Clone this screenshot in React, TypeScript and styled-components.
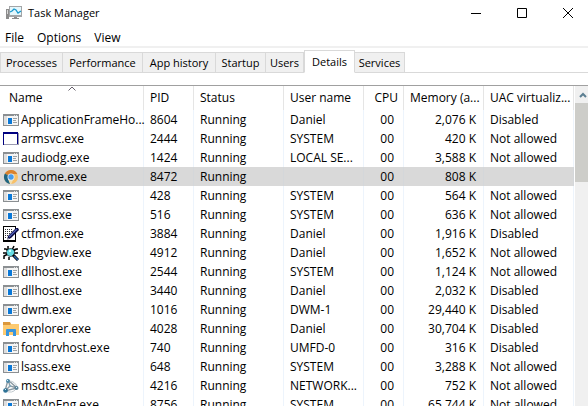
import React from "react";
import styled, { createGlobalStyle } from "styled-components";

const GlobalStyle = createGlobalStyle`
  * { box-sizing: border-box; }
  html, body { margin: 0; height: 100%; overflow: hidden; background: #fff; }
  body, button { font-family: "Open Sans", "Noto Sans", sans-serif; font-size: 12px; color: #000; }
  svg { display: block; flex: none; }
`;

const Window = styled.main`
  display: flex;
  flex-direction: column;
  height: 100vh;
  overflow: hidden;
  background: #fff;
`;

const TitleBar = styled.header`
  display: flex;
  align-items: center;
  height: 25px;
  padding-left: 6px;
  flex: none;
`;

const Title = styled.h1`
  flex: 1;
  margin: 0 0 0 6px;
  font-size: 11px;
  font-weight: 400;
  line-height: 26px;
`;

const CaptionButton = styled.button<{ $edge?: boolean }>`
  display: flex;
  align-items: center;
  justify-content: center;
  width: ${(p) => (p.$edge ? 43 : 46)}px;
  height: 25px;
  padding: 0 0 0 ${(p) => (p.$edge ? 3 : 0)}px;
  border: 0;
  background: transparent;
`;

const MenuBar = styled.nav`
  display: flex;
  gap: 13px;
  height: 23px;
  padding-left: 5px;
  border-bottom: 2px solid #f0f0f0;
  flex: none;
`;

const MenuItem = styled.button`
  padding: 0;
  border: 0;
  background: transparent;
  line-height: 26px;
  height: 26px;
`;

const TabStrip = styled.div`
  display: flex;
  align-items: flex-end;
  height: 25px;
  margin-bottom: 12px;
  border-bottom: 1px solid #d9d9d9;
  flex: none;
`;

const Tab = styled.button<{ $w: number; $active?: boolean }>`
  width: ${(p) => p.$w}px;
  height: ${(p) => (p.$active ? 23 : 21)}px;
  margin: 0 0 -1px 0;
  padding: 0;
  border: 1px solid #d9d9d9;
  border-left-width: ${(p) => (p.$active ? 1 : 0)}px;
  border-bottom-color: ${(p) => (p.$active ? "#fff" : "#d9d9d9")};
  background: ${(p) => (p.$active ? "#fff" : "#f0f0f0")};
  font-size: 11px;
  line-height: 19px;
  white-space: nowrap;
  &:first-child { border-left-width: 1px; }
`;

const ListArea = styled.section`
  display: flex;
  flex: 1;
  min-height: 0;
  border-top: 1px solid #a0a0a0;
`;

const TableWrap = styled.div`
  flex: 1;
  min-width: 0;
  overflow: hidden;
`;

const Table = styled.table`
  width: 100%;
  table-layout: fixed;
  border-collapse: separate;
  border-spacing: 0;
`;

const Col = styled.col<{ $w?: number }>`
  width: ${(p) => (p.$w ? `${p.$w}px` : "auto")};
`;

const HeadCell = styled.th<{ $right?: number; $left?: number }>`
  position: relative;
  height: 24px;
  padding: 0 ${(p) => p.$right ?? 0}px 0 ${(p) => p.$left ?? 6}px;
  border-right: 1px solid #e5e5e5;
  font-weight: 400;
  line-height: 24px;
  text-align: ${(p) => (p.$right === undefined ? "left" : "right")};
  white-space: nowrap;
`;

const SortMark = styled.span`
  position: absolute;
  top: 0;
  left: calc(50% - 4px);
`;

const Row = styled.tr<{ $selected?: boolean }>`
  background: ${(p) => (p.$selected ? "#d9d9d9" : "#fff")};
`;

const Cell = styled.td<{ $right?: number; $selected?: boolean }>`
  height: 19px;
  padding: 0 ${(p) => p.$right ?? 0}px 0 6px;
  border-right: 1px solid ${(p) => (p.$selected ? "#d4d7da" : "#edf4fc")};
  line-height: 19px;
  text-align: ${(p) => (p.$right === undefined ? "left" : "right")};
  white-space: nowrap;
`;

const NameCell = styled(Cell)`
  padding-left: 3px;
`;

const ProcessName = styled.div`
  display: flex;
  align-items: center;
  gap: 2px;
  height: 19px;
`;

const ScrollBar = styled.div`
  width: 13px;
  margin-left: 1px;
  overflow: hidden;
  background: #f0f0f0;
  flex: none;
`;

const ScrollUp = styled.button`
  display: flex;
  align-items: center;
  width: 17px;
  height: 17px;
  padding: 0 0 0 4px;
  border: 0;
  background: #f0f0f0;
`;

const ScrollThumb = styled.div`
  height: 79px;
  background: #cdcdc9;
`;

const AppIcon = () => (
  <svg width="16" height="16" viewBox="0 0 16 16" aria-hidden="true">
    <path d="M0 4h3v10H0z" fill="#8c8c8c" />
    <path d="M1 5h1v4H1z" fill="#d9d9d9" />
    <path d="M3 1h13v11H3z" fill="#a3a5a7" />
    <path d="M4 2h11v8H4z" fill="#e4f7fc" />
    <path d="M4 7l2-1 2-2 2 1 2 3 3-2" fill="none" stroke="#1899cf" strokeWidth="1.3" />
    <path d="M8 12h3v1h2v1H6v-1h2z" fill="#8c8c8c" />
  </svg>
);

const ProgramIcon = () => (
  <svg width="16" height="12" viewBox="0 0 16 12" shapeRendering="crispEdges" aria-hidden="true">
    <path d="M0 0h16v12H0z" fill="#8b8f92" />
    <path d="M1 2h14v9H1z" fill="#f5f5f5" />
    <path d="M1 2h3v9H1z" fill="#dedede" />
    <path d="M11 1h1v1h-1zM13 1h1v1h-1z" fill="#dfe1e2" />
    <path d="M5 4h4v6H5z" fill="#0a78d7" />
    <path d="M10 4h4v1h-4zM10 6h3v1h-3zM10 8h4v1h-4z" fill="#9da1a4" />
  </svg>
);

const FrameIcon = () => (
  <svg width="16" height="13" viewBox="0 0 16 13" shapeRendering="crispEdges" aria-hidden="true">
    <path d="M0 0h15v13H0z" fill="#000080" />
    <path d="M15 1h1v12H1v-1h14z" fill="#9a9ab0" />
    <path d="M1 2h13v10H1z" fill="#fff" />
  </svg>
);

const ChromeIcon = () => (
  <svg width="16" height="16" viewBox="0 0 16 16" aria-hidden="true">
    <circle cx="8" cy="8" r="7" fill="#f7c069" />
    <path d="M8 8L1.9 4.5A7 7 0 0 1 14.3 5H8z" fill="#d9822f" />
    <path d="M8 8L1.9 4.5A7 7 0 0 0 7 15l3-5z" fill="#1f6582" />
    <path d="M5 10l2 5a7 7 0 0 0 1.2 0L10.5 10z" fill="#f4dfae" />
    <circle cx="8" cy="8" r="3.5" fill="#e6eef5" />
    <circle cx="8" cy="8" r="2.7" fill="#469cec" />
  </svg>
);

const PenIcon = () => (
  <svg width="16" height="16" viewBox="0 0 16 16" aria-hidden="true">
    <path d="M0 0h13v16H0z" fill="#000" />
    <path d="M1 1h11v13H1z" fill="#fff" />
    <path d="M2 3.500h8M2 5.500h7M2 7.500h6M2 9.500h4M2 11.500h2" stroke="#333" strokeDasharray="1 1" />
    <path d="M4 14l1-4 8-8h2l1 2-8 8z" fill="#080840" />
    <path d="M6 11l8-8" stroke="#5262bb" strokeWidth="1.3" />
    <path d="M4 14l2-1-1-1z" fill="#fff" />
  </svg>
);

const BugIcon = () => (
  <svg width="16" height="16" viewBox="0 0 16 16" aria-hidden="true">
    <path d="M5 1v3l2 2M11 1L9 5M1 4h2l3 3M15 4h-2l-3 3M0 8h5M15 8h-5M1 14v-3l4-2M6 15v-3M10 5l4-1" fill="none" stroke="#000" strokeWidth="1.5" />
    <circle cx="7.5" cy="7.5" r="4.200" fill="#142f3a" />
    <circle cx="7.5" cy="7.5" r="3.6" fill="#66dce5" />
    <path d="M6 5h2v2H6z" fill="#c8ffff" />
    <path d="M10 10l5 5" stroke="#000" strokeWidth="3" />
    <path d="M11 11l4 4" stroke="#2a62ad" strokeWidth="1.6" />
  </svg>
);

const FolderIcon = () => (
  <svg width="16" height="16" viewBox="0 0 16 16" aria-hidden="true">
    <path d="M0 1h7l1 2h8v4H0z" fill="#dc983b" />
    <path d="M0 4h7l1-1h8v11H0z" fill="#fdca70" />
    <path d="M3 15V9q0-1 1-1h8q1 0 1 1v6h-3v-4H6v4z" fill="#3995dd" />
  </svg>
);

const NetworkIcon = () => (
  <svg width="16" height="16" viewBox="0 0 16 16" aria-hidden="true">
    <path d="M5 2L2 13l12-3zM5 2l2 6 7 2M7 8l-5 5" fill="none" stroke="#8b9aa3" strokeWidth="1.4" />
    <path d="M6 3q6 0 8 6M3 13q6 3 10-2" fill="none" stroke="#c0c9ce" />
    <circle cx="5" cy="3" r="2" fill="#4f8aa8" />
    <circle cx="2.5" cy="12.5" r="2.3" fill="#2e7296" />
    <circle cx="13.5" cy="10" r="2" fill="#5b849a" />
    <circle cx="7" cy="8" r="1.3" fill="#86a9bb" />
    <path d="M4 2h1v1H4zM2 11h1v1H2zM13 9h1v1h-1z" fill="#d7f2fb" />
  </svg>
);

const icons = {
  program: ProgramIcon,
  frame: FrameIcon,
  chrome: ChromeIcon,
  pen: PenIcon,
  bug: BugIcon,
  folder: FolderIcon,
  network: NetworkIcon,
};

type Process = [keyof typeof icons, string, string, string, string, string];

const processes: Process[] = [
  ["program", "ApplicationFrameHo...", "8604", "Daniel", "2,076 K", "Disabled"],
  ["frame", "armsvc.exe", "2444", "SYSTEM", "420 K", "Not allowed"],
  ["program", "audiodg.exe", "1424", "LOCAL SE...", "3,588 K", "Not allowed"],
  ["chrome", "chrome.exe", "8472", "", "808 K", ""],
  ["program", "csrss.exe", "428", "SYSTEM", "564 K", "Not allowed"],
  ["program", "csrss.exe", "516", "SYSTEM", "636 K", "Not allowed"],
  ["pen", "ctfmon.exe", "3884", "Daniel", "1,916 K", "Disabled"],
  ["bug", "Dbgview.exe", "4912", "Daniel", "1,652 K", "Not allowed"],
  ["program", "dllhost.exe", "2544", "SYSTEM", "1,124 K", "Not allowed"],
  ["program", "dllhost.exe", "3440", "Daniel", "2,032 K", "Disabled"],
  ["program", "dwm.exe", "1016", "DWM-1", "29,440 K", "Disabled"],
  ["folder", "explorer.exe", "4028", "Daniel", "30,704 K", "Disabled"],
  ["program", "fontdrvhost.exe", "740", "UMFD-0", "316 K", "Disabled"],
  ["program", "lsass.exe", "648", "SYSTEM", "3,288 K", "Not allowed"],
  ["network", "msdtc.exe", "4216", "NETWORK...", "752 K", "Not allowed"],
  ["program", "MsMpEng.exe", "8756", "SYSTEM", "65,744 K", "Not allowed"],
];

const tabs: [string, number][] = [
  ["Processes", 63],
  ["Performance", 80],
  ["App history", 73],
  ["Startup", 50],
  ["Users", 38],
  ["Details", 51],
  ["Services", 50],
];

export default function App() {
  return (
    <>
      <GlobalStyle />
      <Window>
        <TitleBar>
          <AppIcon />
          <Title>Task Manager</Title>
          <CaptionButton aria-label="Minimize">
            <svg width="10" height="10" viewBox="0 0 10 10"><path d="M0 5h10v1H0z" /></svg>
          </CaptionButton>
          <CaptionButton aria-label="Maximize">
            <svg width="10" height="10" viewBox="0 0 10 10"><path d="M.5.5h9v9h-9z" fill="none" stroke="#000" /></svg>
          </CaptionButton>
          <CaptionButton $edge aria-label="Close">
            <svg width="10" height="10" viewBox="0 0 10 10"><path d="M0 0l10 10M10 0L0 10" stroke="#000" /></svg>
          </CaptionButton>
        </TitleBar>
        <MenuBar>
          <MenuItem>File</MenuItem>
          <MenuItem>Options</MenuItem>
          <MenuItem>View</MenuItem>
        </MenuBar>
        <TabStrip role="tablist">
          {tabs.map(([label, w]) => (
            <Tab key={label} role="tab" $w={w} $active={label === "Details"} aria-selected={label === "Details"}>
              {label}
            </Tab>
          ))}
        </TabStrip>
        <ListArea>
          <TableWrap>
            <Table>
              <colgroup>
                <Col />
                <Col $w={50} />
                <Col $w={90} />
                <Col $w={80} />
                <Col $w={40} />
                <Col $w={80} />
                <Col $w={90} />
              </colgroup>
              <thead>
                <tr>
                  <HeadCell $left={9} aria-sort="ascending">
                    Name
                    <SortMark>
                      <svg width="8" height="5" viewBox="0 0 8 5"><path d="M.5 4.500L4 1l3.500 3.500" fill="none" stroke="#66606c" /></svg>
                    </SortMark>
                  </HeadCell>
                  <HeadCell>PID</HeadCell>
                  <HeadCell>Status</HeadCell>
                  <HeadCell>User name</HeadCell>
                  <HeadCell $right={5}>CPU</HeadCell>
                  <HeadCell $right={4}>Memory (a...</HeadCell>
                  <HeadCell>UAC virtualiz...</HeadCell>
                </tr>
              </thead>
              <tbody>
                {processes.map(([icon, name, pid, user, memory, uac]) => {
                  const Icon = icons[icon];
                  const s = pid === "8472";
                  return (
                    <Row key={pid} $selected={s} aria-selected={s}>
                      <NameCell $selected={s}>
                        <ProcessName><Icon />{name}</ProcessName>
                      </NameCell>
                      <Cell $selected={s}>{pid}</Cell>
                      <Cell $selected={s}>Running</Cell>
                      <Cell $selected={s}>{user}</Cell>
                      <Cell $selected={s} $right={9}>00</Cell>
                      <Cell $selected={s} $right={7}>{memory}</Cell>
                      <Cell $selected={s}>{uac}</Cell>
                    </Row>
                  );
                })}
              </tbody>
            </Table>
          </TableWrap>
          <ScrollBar>
            <ScrollUp aria-label="Scroll up">
              <svg width="8" height="6" viewBox="0 0 8 6"><path d="M1 5l3-3 3 3" fill="none" stroke="#5c7f92" strokeWidth="2" /></svg>
            </ScrollUp>
            <ScrollThumb />
          </ScrollBar>
        </ListArea>
      </Window>
    </>
  );
}
